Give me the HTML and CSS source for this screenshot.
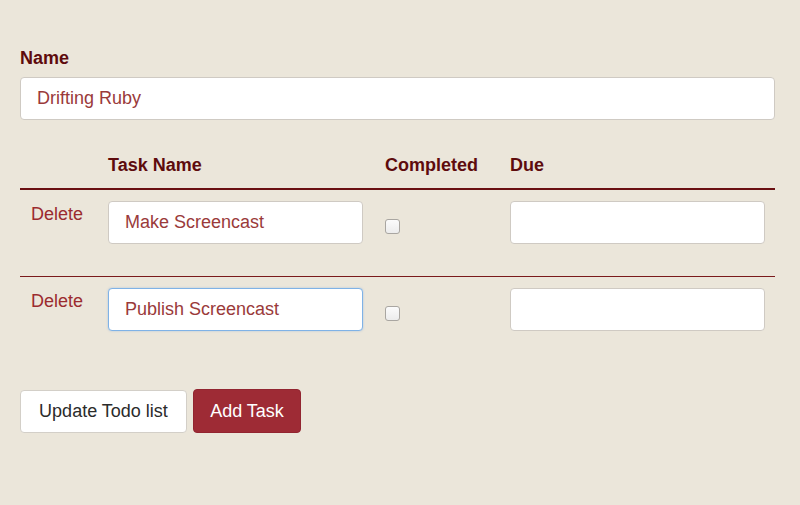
FILE: index.html
```html
<!DOCTYPE html>
<html>
<head>
<meta charset="utf-8">
<link rel="stylesheet" href="styles.css">
</head>
<body>
<form class="todo-form">
  <label class="field-label" for="name">Name</label>
  <input class="text-input" id="name" type="text" value="Drifting Ruby">

  <table class="tasks">
    <colgroup>
      <col class="col-del"><col class="col-name"><col class="col-done"><col class="col-due">
    </colgroup>
    <thead>
      <tr>
        <th></th>
        <th>Task Name</th>
        <th>Completed</th>
        <th>Due</th>
      </tr>
    </thead>
    <tbody>
      <tr>
        <td class="cell-del"><a class="delete-link" href="#">Delete</a></td>
        <td><input class="text-input task-input" type="text" value="Make Screencast"></td>
        <td><input class="check" type="checkbox"></td>
        <td><input class="text-input due-input" type="text" value=""></td>
      </tr>
      <tr>
        <td class="cell-del"><a class="delete-link" href="#">Delete</a></td>
        <td><input class="text-input task-input is-focused" type="text" value="Publish Screencast"></td>
        <td><input class="check" type="checkbox"></td>
        <td><input class="text-input due-input" type="text" value=""></td>
      </tr>
    </tbody>
  </table>

  <div class="actions">
    <button class="btn btn-default" type="button">Update Todo list</button>
    <button class="btn btn-primary" type="button">Add Task</button>
  </div>
</form>
</body>
</html>
```

FILE: styles.css
```css
html, body {
  margin: 0;
  padding: 0;
  background: #ebe6da;
}

body {
  font-family: "Liberation Sans", Arial, Helvetica, sans-serif;
  font-size: 18px;
  color: #333;
}

.todo-form {
  width: 755px;
  margin: 0 0 0 20px;
  padding-top: 48px;
}

.field-label {
  display: block;
  font-size: 18px;
  font-weight: bold;
  line-height: 20px;
  color: #5e0b0d;
  margin-bottom: 9px;
}

.text-input {
  display: block;
  box-sizing: border-box;
  height: 43px;
  width: 100%;
  padding: 0 16px;
  margin: 0;
  font-family: "Liberation Sans", Arial, Helvetica, sans-serif;
  font-size: 18px;
  color: #9a3a3a;
  background: #fff;
  border: 1px solid #cfcac3;
  border-radius: 4px;
  outline: none;
}

.tasks {
  width: 755px;
  margin-top: 34px;
  border-collapse: separate;
  border-spacing: 0;
  table-layout: fixed;
}

.col-del { width: 88px; }
.col-name { width: 277px; }
.col-done { width: 125px; }
.col-due { width: 265px; }

.tasks th {
  text-align: left;
  font-size: 18px;
  font-weight: bold;
  line-height: 22px;
  color: #5e0b0d;
  padding: 0 0 12px 0;
  border-bottom: 2px solid #6a1012;
}

.tasks td {
  vertical-align: top;
  padding: 11px 0 32px 0;
}

.tasks tbody tr + tr td {
  border-top: 1px solid #7a1a1c;
  padding-bottom: 0;
}

.tasks td.cell-del {
  padding-top: 13px;
  padding-left: 11px;
  line-height: 22px;
}

.tasks tbody tr + tr td.cell-del {
  padding-top: 13px;
}

.delete-link {
  color: #9b2b2f;
  text-decoration: none;
  font-size: 18px;
}

.task-input {
  width: 255px;
}

.task-input.is-focused {
  border-color: #7fb2e6;
  box-shadow: 0 0 2px rgba(102, 160, 230, 0.5);
}

.due-input {
  width: 255px;
}

.check {
  appearance: none;
  -webkit-appearance: none;
  display: block;
  box-sizing: border-box;
  width: 15px;
  height: 15px;
  margin: 18px 0 0 0;
  border: 1px solid #a9a6a1;
  border-radius: 3px;
  background: linear-gradient(#fbfbfb, #ececec);
}

.actions {
  display: flex;
  align-items: flex-start;
  gap: 6px;
  margin-top: 58px;
}

.btn {
  box-sizing: border-box;
  height: 44px;
  padding: 0;
  font-family: "Liberation Sans", Arial, Helvetica, sans-serif;
  font-size: 18px;
  text-align: center;
  border-radius: 4px;
  cursor: pointer;
}

.btn-default {
  width: 167px;
  margin-top: 1px;
  height: 43px;
  background: #fff;
  color: #2b2b2b;
  border: 1px solid #d3cfc8;
}

.btn-primary {
  width: 108px;
  background: #9e2b35;
  color: #fff;
  border: 1px solid #922530;
}
```
